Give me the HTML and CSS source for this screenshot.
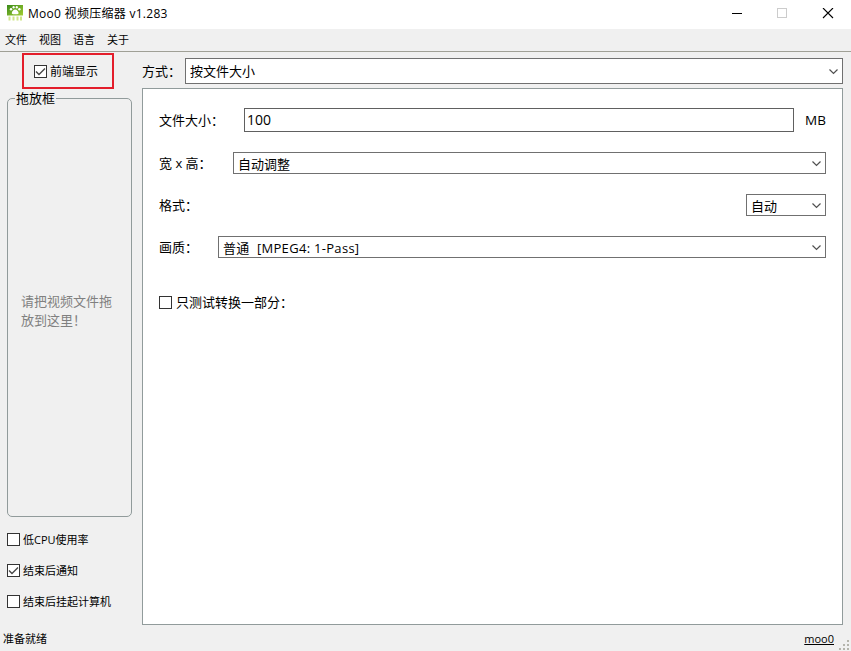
FILE: index.html
```html
<!DOCTYPE html>
<html lang="zh-CN">
<head>
    <meta charset="utf-8">
    <title>Moo0 视频压缩器 v1.283</title>
    <link rel="stylesheet" href="styles.css">
</head>
<body>
    <div class="titlebar">
        <svg class="logo" width="16" height="16" viewBox="0 0 16 16">
            <defs>
                <linearGradient id="green" x1="0" y1="0" x2="1" y2="1">
                    <stop offset="0" stop-color="#3a8a1a"/>
                    <stop offset="1" stop-color="#a3ce32"/>
                </linearGradient>
            </defs>
            <rect width="16" height="10.5" fill="url(#green)"/>
            <g fill="#fff">
                <ellipse cx="4" cy="4.3" rx="1.2" ry="1.2"/>
                <ellipse cx="6.6" cy="2.2" rx="1.1" ry="1.2"/>
                <ellipse cx="9.8" cy="2.2" rx="1.1" ry="1.2"/>
                <ellipse cx="12.4" cy="4.3" rx="1.2" ry="1.2"/>
                <path d="M8.2 4.6C6.5 4.6 4.8 6.6 4.8 8c0 1.6 2 1.3 3.4 1.3s3.4.3 3.4-1.3c0-1.4-1.7-3.4-3.4-3.4z"/>
            </g>
            <path d="M1.5 11.5h2v4h-2zM5.5 11.5h2v4h-2zM9.5 11.5h2v4h-2zM13 11.5h2v4h-2z" fill="#cfe58a"/>
        </svg>
        <span class="title">Moo0 视频压缩器 v1.283</span>
        <svg class="window-buttons" width="105" height="12" viewBox="0 0 105 12">
            <path d="M0 5.5h10" stroke="#000"/>
            <rect x="45.5" y=".5" width="9" height="9" fill="none" stroke="#ccc"/>
            <path d="M91 0l10 10M101 0L91 10" stroke="#000" stroke-width="1.1"/>
        </svg>
    </div>

    <div class="menubar">
        <span>文件</span>
        <span>视图</span>
        <span>语言</span>
        <span>关于</span>
    </div>

    <div class="content">
        <div class="sidebar">
            <div class="highlight">
                <label class="check front">
                    <svg class="box" width="13" height="13"><rect x=".5" y=".5" width="12" height="12"/><path d="M2 6.5l3 3 6-6"/></svg>
                    <span>前端显示</span>
                </label>
            </div>
            <fieldset class="dropzone">
                <legend>拖放框</legend>
                <p>请把视频文件拖<br>放到这里！</p>
            </fieldset>
            <label class="check option">
                <svg class="box" width="13" height="13"><rect x=".5" y=".5" width="12" height="12"/></svg>
                <span>低CPU使用率</span>
            </label>
            <label class="check option">
                <svg class="box" width="13" height="13"><rect x=".5" y=".5" width="12" height="12"/><path d="M2 6.5l3 3 6-6"/></svg>
                <span>结束后通知</span>
            </label>
            <label class="check option">
                <svg class="box" width="13" height="13"><rect x=".5" y=".5" width="12" height="12"/></svg>
                <span>结束后挂起计算机</span>
            </label>
        </div>

        <div class="main">
            <div class="method">
                <span class="method-label">方式：</span>
                <div class="select method-select">
                    <span>按文件大小</span>
                    <svg class="arrow" width="9" height="6"><path d="M.5 .5l4 4 4-4"/></svg>
                </div>
            </div>
            <div class="panel">
                <div class="row size-row">
                    <span class="size-label">文件大小：</span>
                    <div class="input">100</div>
                    <span class="unit">MB</span>
                </div>
                <div class="row">
                    <span class="dimension-label">宽 x 高：</span>
                    <div class="select">
                        <span>自动调整</span>
                        <svg class="arrow" width="9" height="6"><path d="M.5 .5l4 4 4-4"/></svg>
                    </div>
                </div>
                <div class="row">
                    <span class="format-label">格式：</span>
                    <div class="select format-select">
                        <span>自动</span>
                        <svg class="arrow" width="9" height="6"><path d="M.5 .5l4 4 4-4"/></svg>
                    </div>
                </div>
                <div class="row">
                    <span class="quality-label">画质：</span>
                    <div class="select">
                        <span class="quality">普通&nbsp; [MPEG4: 1-Pass]</span>
                        <svg class="arrow" width="9" height="6"><path d="M.5 .5l4 4 4-4"/></svg>
                    </div>
                </div>
                <label class="check partial">
                    <svg class="box" width="13" height="13"><rect x=".5" y=".5" width="12" height="12"/></svg>
                    <span>只测试转换一部分：</span>
                </label>
            </div>
        </div>
    </div>

    <div class="statusbar">
        <span>准备就绪</span>
        <a class="link">moo0</a>
        <svg class="grip" width="11" height="11" fill="#b4b4ac">
            <path d="M8 0h2v2H8zM4 4h2v2H4zM8 4h2v2H8zM0 8h2v2H0zM4 8h2v2H4zM8 8h2v2H8z"/>
        </svg>
    </div>
</body>
</html>
```
FILE: styles.css
```css
* {
    box-sizing: border-box;
}
body {
    margin: 0;
    width: 851px;
    height: 651px;
    overflow: hidden;
    display: flex;
    flex-direction: column;
    background-color: #f0f0f0;
    color: #000;
    font-family: "Open Sans", "Noto Sans CJK SC", sans-serif;
    font-size: 13px;
    line-height: 18px;
    white-space: nowrap;
}

/* Title bar and menu */
.titlebar {
    height: 29px;
    display: flex;
    align-items: flex-start;
    background-color: #fff;
    padding: 5px 14px 0 7px;
}
.title {
    margin: 0 auto 0 5px;
    font-size: 12px;
    letter-spacing: 0.28px;
}
.window-buttons {
    margin: 3px 0 0 0;
}
.menubar {
    height: 23px;
    display: flex;
    gap: 12px;
    padding: 2px 5px 0;
    border-bottom: 1px solid #a0a096;
    font-size: 11px;
}

/* Left column */
.content {
    flex: 1;
    display: flex;
}
.sidebar {
    width: 142px;
    padding: 1px 10px 0 7px;
}
.highlight {
    width: 92px;
    height: 36px;
    margin-left: 15px;
    padding: 9px 0 0 10px;
    border: 2px solid #e31e2b;
}
.check {
    display: flex;
    align-items: center;
    height: 18px;
}
.front {
    font-size: 12px;
    gap: 3px;
    height: 15px;
}
.box {
    fill: #fff;
    stroke: #333;
    flex: none;
}
.box path {
    fill: none;
    stroke: #484848;
    stroke-width: 1.4;
}
.dropzone {
    width: 125px;
    height: 428px;
    margin: 0 0 13px;
    padding: 0 0 0 13px;
    border: 1px solid #919b9b;
    border-radius: 5px;
}
.dropzone legend {
    margin-left: -6px;
    padding: 1px 1px 0;
    line-height: 17px;
}
.dropzone p {
    margin: 185px 0 0;
    color: #808080;
    line-height: 19px;
}
.option {
    margin-bottom: 13px;
    gap: 3px;
    font-size: 11px;
}
.option span {
    padding-top: 2px;
}

/* Right column */
.main {
    width: 701px;
    padding-top: 6px;
}
.method {
    display: flex;
    align-items: center;
    margin-bottom: 4px;
}
.method-label {
    width: 43px;
}
.select {
    flex: 1;
    height: 22px;
    display: flex;
    align-items: center;
    justify-content: space-between;
    padding: 1px 4px 0;
    background-color: #fff;
    border: 1px solid #707070;
}
.method-select {
    height: 26px;
    padding: 0 4px;
}
.method-select .arrow {
    margin-top: 2px;
}
.arrow {
    fill: none;
    stroke: #505050;
    stroke-width: 1.2;
}
.panel {
    height: 537px;
    padding: 19px 16px 0;
    background-color: #fff;
    border: 1px solid #919b9b;
}
.row {
    display: flex;
    align-items: center;
    height: 22px;
    margin-bottom: 20px;
}
.size-row {
    height: 24px;
}
.size-label {
    width: 85px;
}
.dimension-label {
    width: 74px;
}
.format-label {
    width: 587px;
}
.quality-label {
    width: 59px;
}
.quality {
    letter-spacing: 0.3px;
}
.input {
    width: 550px;
    height: 24px;
    padding: 2px 2px;
    border: 1px solid #606060;
    font-size: 14px;
}
.unit {
    margin-left: 11px;
    font-size: 13.5px;
}
.partial {
    margin-top: 35px;
    gap: 4px;
}

/* Status bar */
.statusbar {
    height: 24px;
    display: flex;
    padding: 3px 1px 0 3px;
    font-size: 11px;
}
.link {
    margin-left: auto;
    text-decoration: underline;
}
.grip {
    margin: 10px 0 0 5px;
}
```
